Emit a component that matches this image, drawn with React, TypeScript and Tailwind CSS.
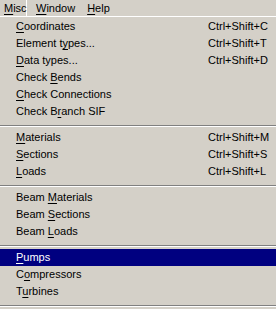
import React from 'react';

type Item = { label: string; key: number; shortcut?: string; active?: boolean } | 'sep';

const items: Item[] = [
  { label: 'Coordinates', key: 0, shortcut: 'Ctrl+Shift+C' },
  { label: 'Element types...', key: 9, shortcut: 'Ctrl+Shift+T' },
  { label: 'Data types...', key: 0, shortcut: 'Ctrl+Shift+D' },
  { label: 'Check Bends', key: 6 },
  { label: 'Check Connections', key: 0 },
  { label: 'Check Branch SIF', key: 7 },
  'sep',
  { label: 'Materials', key: 0, shortcut: 'Ctrl+Shift+M' },
  { label: 'Sections', key: 0, shortcut: 'Ctrl+Shift+S' },
  { label: 'Loads', key: 0, shortcut: 'Ctrl+Shift+L' },
  'sep',
  { label: 'Beam Materials', key: 5 },
  { label: 'Beam Sections', key: 5 },
  { label: 'Beam Loads', key: 5 },
  'sep',
  { label: 'Pumps', key: 0, active: true },
  { label: 'Compressors', key: 1 },
  { label: 'Turbines', key: 1 },
  'sep',
];

const Accel = ({ text, at }: { text: string; at: number }) => (
  <>
    {text.slice(0, at)}
    <span className="underline decoration-1 underline-offset-[2px]">{text[at]}</span>
    {text.slice(at + 1)}
  </>
);

export default function App() {
  return (
    <div
      className="w-[276px] h-[309px] overflow-hidden bg-[#d4d0c8] text-black text-[11px] leading-none"
      style={{ fontFamily: '"Liberation Sans", Arial, sans-serif' }}
    >
      {/* menu bar */}
      <div className="flex h-[16px] items-center">
        <div className="flex h-full w-[27px] items-center border-r border-white pl-[4px]">
          <Accel text="Misc" at={0} />
        </div>
        <div className="ml-[9px]">
          <Accel text="Window" at={0} />
        </div>
        <div className="ml-[12px]">
          <Accel text="Help" at={0} />
        </div>
      </div>

      {/* dropdown */}
      <div className="border-t border-white pt-[1px]">
        {items.map((it, i) =>
          it === 'sep' ? (
            <div key={i} className="h-[9px] pt-[5px]">
              <div className="h-px bg-[#808080]" />
              <div className="h-px bg-white" />
            </div>
          ) : (
            <div
              key={i}
              className={`flex h-[17px] items-center pl-[16px] ${it.active ? 'bg-[#000080] text-white' : ''}`}
            >
              <div className="w-[192px]">
                <Accel text={it.label} at={it.key} />
              </div>
              {it.shortcut && <div>{it.shortcut}</div>}
            </div>
          )
        )}
      </div>
    </div>
  );
}
